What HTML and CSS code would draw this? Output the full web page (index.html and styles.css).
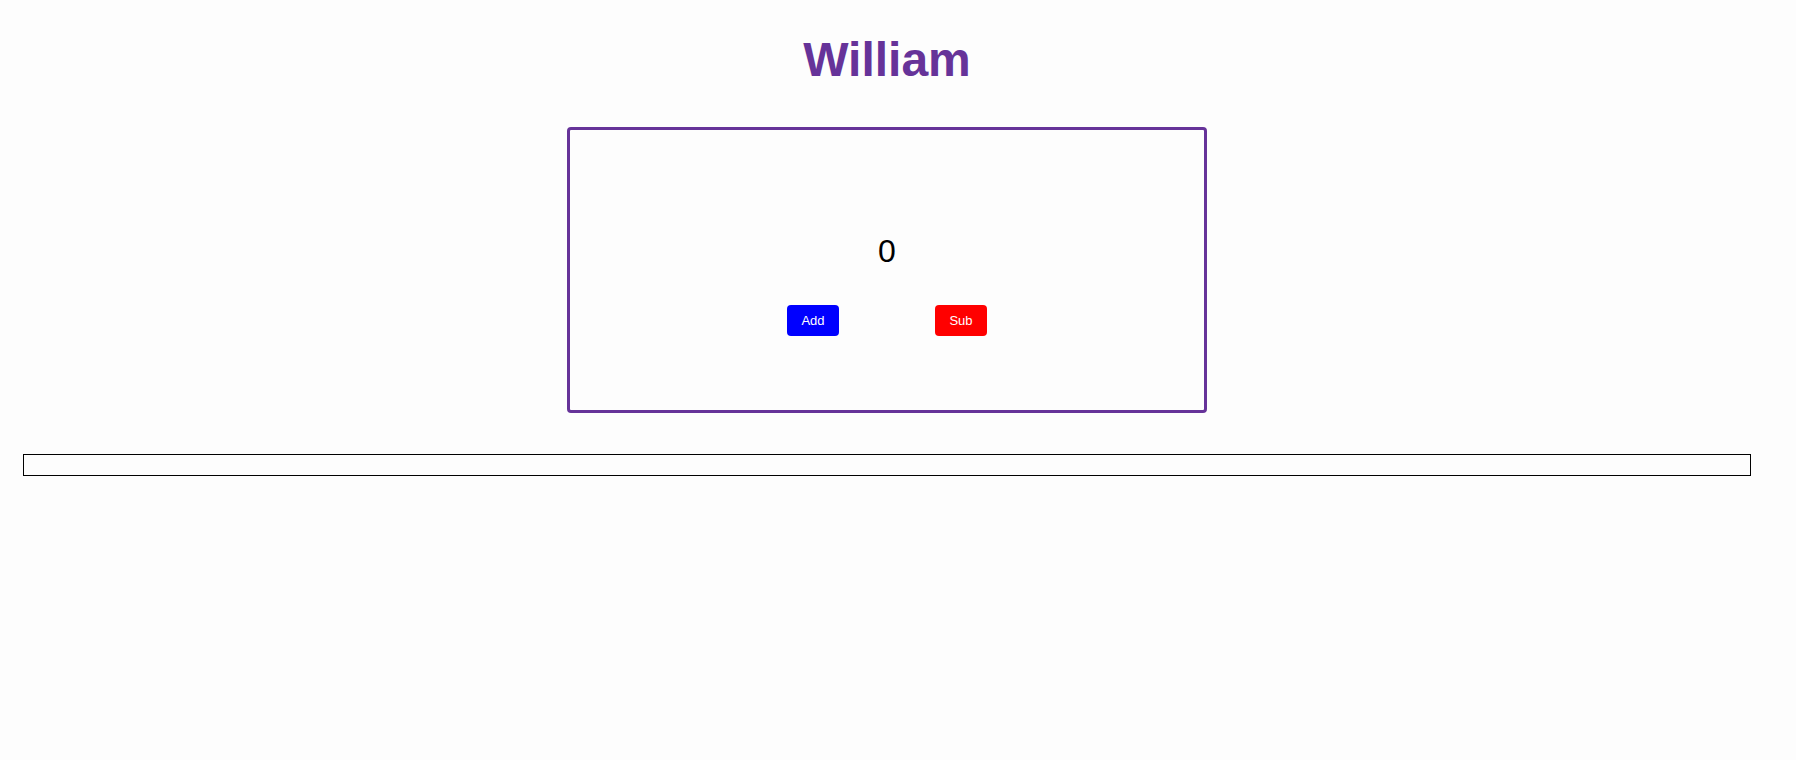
FILE: index.html
```html
<!DOCTYPE html>
<html lang="en">
<head>
<meta charset="utf-8">
<title>William</title>
<link rel="stylesheet" href="styles.css">
</head>
<body>
<div class="page">
  <h1 class="title">William</h1>
  <div class="card">
    <div class="count">0</div>
    <div class="actions">
      <button class="btn btn-add">Add</button>
      <button class="btn btn-sub">Sub</button>
    </div>
  </div>
  <div class="bar"></div>
</div>
</body>
</html>
```
FILE: styles.css
```css
html, body {
  margin: 0;
  padding: 0;
  background: #fdfdfd;
}
body {
  font-family: "Liberation Sans", Arial, sans-serif;
}
.page {
  width: 1774px;
  display: flex;
  flex-direction: column;
  align-items: center;
}
.title {
  margin: 32px 0 0;
  font-size: 48px;
  line-height: 55px;
  font-weight: bold;
  color: #663399;
}
.card {
  box-sizing: border-box;
  width: 640px;
  height: 286px;
  margin-top: 40px;
  border: 3px solid #663399;
  border-radius: 4px;
  display: flex;
  flex-direction: column;
  align-items: center;
  padding-top: 103px;
}
.count {
  font-size: 32px;
  line-height: 37px;
  color: #000;
}
.actions {
  display: flex;
  gap: 96px;
  margin-top: 35px;
}
.btn {
  box-sizing: border-box;
  width: 52px;
  height: 31px;
  border: none;
  border-radius: 4px;
  color: #fff;
  font-family: "Liberation Sans", Arial, sans-serif;
  font-size: 13px;
  padding: 0;
}
.btn-add { background: #0000ff; }
.btn-sub { background: #ff0000; }
.bar {
  align-self: stretch;
  margin: 41px 23px 0;
  height: 22px;
  box-sizing: border-box;
  border: 1px solid #000;
}
```
